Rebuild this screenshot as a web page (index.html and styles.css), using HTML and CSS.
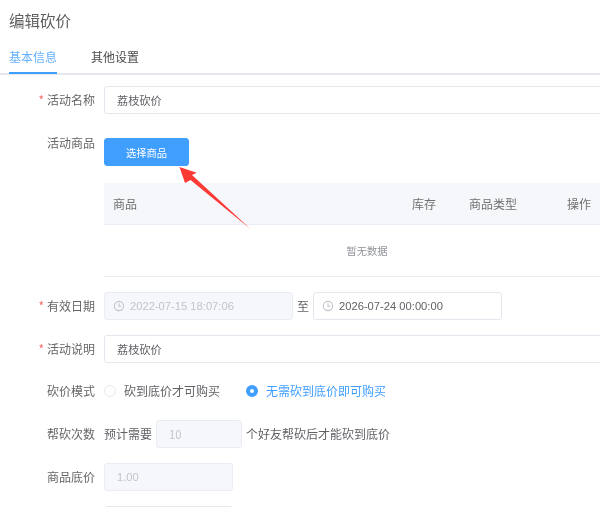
FILE: index.html
```html
<!DOCTYPE html>
<html lang="zh">
<head>
<meta charset="utf-8">
<title>编辑砍价</title>
<link rel="stylesheet" href="styles.css">
</head>
<body>
<div class="page">
  <h1 class="title">编辑砍价</h1>
  <div class="tabs">
    <span class="tab active">基本信息</span>
    <span class="tab">其他设置</span>
  </div>
  <form class="form">
    <div class="row row-name">
      <label class="label"><i class="req">*</i>活动名称</label>
      <div class="input wide">荔枝砍价</div>
    </div>
    <div class="row row-goods">
      <label class="label">活动商品</label>
      <div class="goods">
        <button type="button" class="btn">选择商品</button>
        <div class="table">
          <div class="thead">
            <span class="col c1">商品</span>
            <span class="col c2">库存</span>
            <span class="col c3">商品类型</span>
            <span class="col c4">操作</span>
          </div>
          <div class="empty">暂无数据</div>
        </div>
      </div>
    </div>
    <div class="row row-date">
      <label class="label"><i class="req">*</i>有效日期</label>
      <div class="input date disabled">
        <svg class="clock" viewBox="0 0 12 12"><circle cx="6" cy="6" r="4.6"/><path d="M6 3.2V6.2H8.4"/></svg>
        <span>2022-07-15 18:07:06</span>
      </div>
      <span class="txt to">至</span>
      <div class="input date">
        <svg class="clock" viewBox="0 0 12 12"><circle cx="6" cy="6" r="4.6"/><path d="M6 3.2V6.2H8.4"/></svg>
        <span>2026-07-24 00:00:00</span>
      </div>
    </div>
    <div class="row row-desc">
      <label class="label"><i class="req">*</i>活动说明</label>
      <div class="input wide">荔枝砍价</div>
    </div>
    <div class="row row-mode">
      <label class="label">砍价模式</label>
      <span class="radio"></span>
      <span class="txt radio-text">砍到底价才可购买</span>
      <span class="radio on"></span>
      <span class="txt radio-text on">无需砍到底价即可购买</span>
    </div>
    <div class="row row-times">
      <label class="label">帮砍次数</label>
      <span class="txt">预计需要</span>
      <div class="input small disabled">10</div>
      <span class="txt">个好友帮砍后才能砍到底价</span>
    </div>
    <div class="row row-price">
      <label class="label">商品底价</label>
      <div class="input price disabled">1.00</div>
    </div>
    <div class="row row-next">
      <span class="label"></span>
      <div class="input price"></div>
    </div>
  </form>
  <svg class="arrow" viewBox="0 0 600 507" aria-hidden="true">
    <polygon points="179.5,167 196.7,172.7 192,175 250.5,229 190.5,180 185,183"/>
  </svg>
</div>
</body>
</html>
```

FILE: styles.css
```css
* { box-sizing: border-box; }
html, body {
  margin: 0;
  height: 507px;
  overflow: hidden;
  background: #fff;
}
body {
  font-family: "Noto Sans CJK SC", "Liberation Sans", sans-serif;
  font-size: 12px;
  color: #606266;
}
.page {
  position: relative;
  width: 600px;
  height: 507px;
  overflow: hidden;
  padding-top: 9px;
  filter: blur(0.35px);
}
.title {
  margin: 0 0 0 9px;
  font-size: 15.5px;
  line-height: 22px;
  font-weight: 400;
  color: #5f5f5f;
}
.tabs {
  display: flex;
  gap: 34px;
  margin-top: 16px;
  padding-left: 9px;
  height: 28px;
  border-bottom: 2px solid #e4e7ed;
}
.tab {
  height: 27px;
  line-height: 20px;
  color: #4c4c4c;
}
.tab.active {
  color: #66b1ff;
  border-bottom: 2px solid #409eff;
}
.form {
  margin-top: 11px;
}
.row {
  display: flex;
  align-items: center;
  height: 28px;
}
.label {
  width: 95px;
  margin-right: 9px;
  padding-bottom: 2px;
  text-align: right;
  flex: none;
  color: #666;
}
.txt {
  padding-bottom: 2px;
}
.req {
  font-style: normal;
  color: #f56c6c;
  margin-right: 3px;
}
.input {
  display: flex;
  align-items: center;
  height: 28px;
  flex: none;
  border: 1px solid #e4e7ed;
  border-radius: 3px;
  padding-left: 12px;
  font-size: 11.2px;
  color: #606266;
  background: #fff;
}
.wide { width: 520px; }
.disabled {
  background: #f5f7fa;
  border-color: #e9ecf2;
  color: #c0c4cc;
}
.row-goods {
  align-items: flex-start;
  height: auto;
  margin-top: 24px;
}
.row-goods .label {
  line-height: 10px;
  padding-bottom: 0;
}
.goods {
  flex: 1;
}
.btn {
  display: block;
  width: 85px;
  height: 28px;
  padding: 0;
  border: 1px solid #409eff;
  border-radius: 3px;
  background: #409eff;
  color: #fff;
  font: inherit;
  font-size: 10.3px;
}
.table {
  margin-top: 17px;
  border-bottom: 1px solid #ebeef5;
  width: 496px;
}
.thead {
  display: flex;
  align-items: center;
  height: 42px;
  background: #f5f7fa;
  border-bottom: 1px solid #ebeef5;
  color: #707070;
}
.col { flex: none; }
.c1 { width: 308px; padding-left: 9px; }
.c2 { width: 57px; }
.c3 { width: 98px; }
.c4 { width: 33px; }
.empty {
  height: 51px;
  display: flex;
  align-items: center;
  justify-content: center;
  font-size: 10.3px;
  color: #909399;
  padding-left: 30px;
}
.row-date { margin-top: 15px; }
.date {
  width: 189px;
  padding-left: 8px;
  font-family: "Liberation Sans", sans-serif;
  font-size: 11.2px;
}
.clock {
  width: 12px;
  height: 12px;
  margin-right: 5px;
  fill: none;
  stroke: #c0c4cc;
  stroke-width: 1.1;
}
.to {
  width: 20px;
  text-align: center;
  flex: none;
}
.row-desc { margin-top: 15px; }
.row-mode { margin-top: 14px; }
.radio {
  width: 12px;
  height: 12px;
  flex: none;
  border: 1px solid #e4e7ed;
  border-radius: 50%;
  background: #fff;
}
.radio.on {
  border: 4px solid #409eff;
  margin-left: 26px;
}
.radio-text {
  margin-left: 8px;
  color: #606266;
}
.radio-text.on { color: #409eff; }
.row-times { margin-top: 15px; }
.small {
  width: 86px;
  margin: 0 4px;
}
.row-price { margin-top: 15px; }
.price {
  width: 129px;
  font-family: "Liberation Sans", sans-serif;
}
.row-next { margin-top: 15px; }
.arrow {
  position: absolute;
  left: 0;
  top: 0;
  width: 600px;
  height: 507px;
  pointer-events: none;
}
.arrow polygon { fill: #fb3a36; }
```
